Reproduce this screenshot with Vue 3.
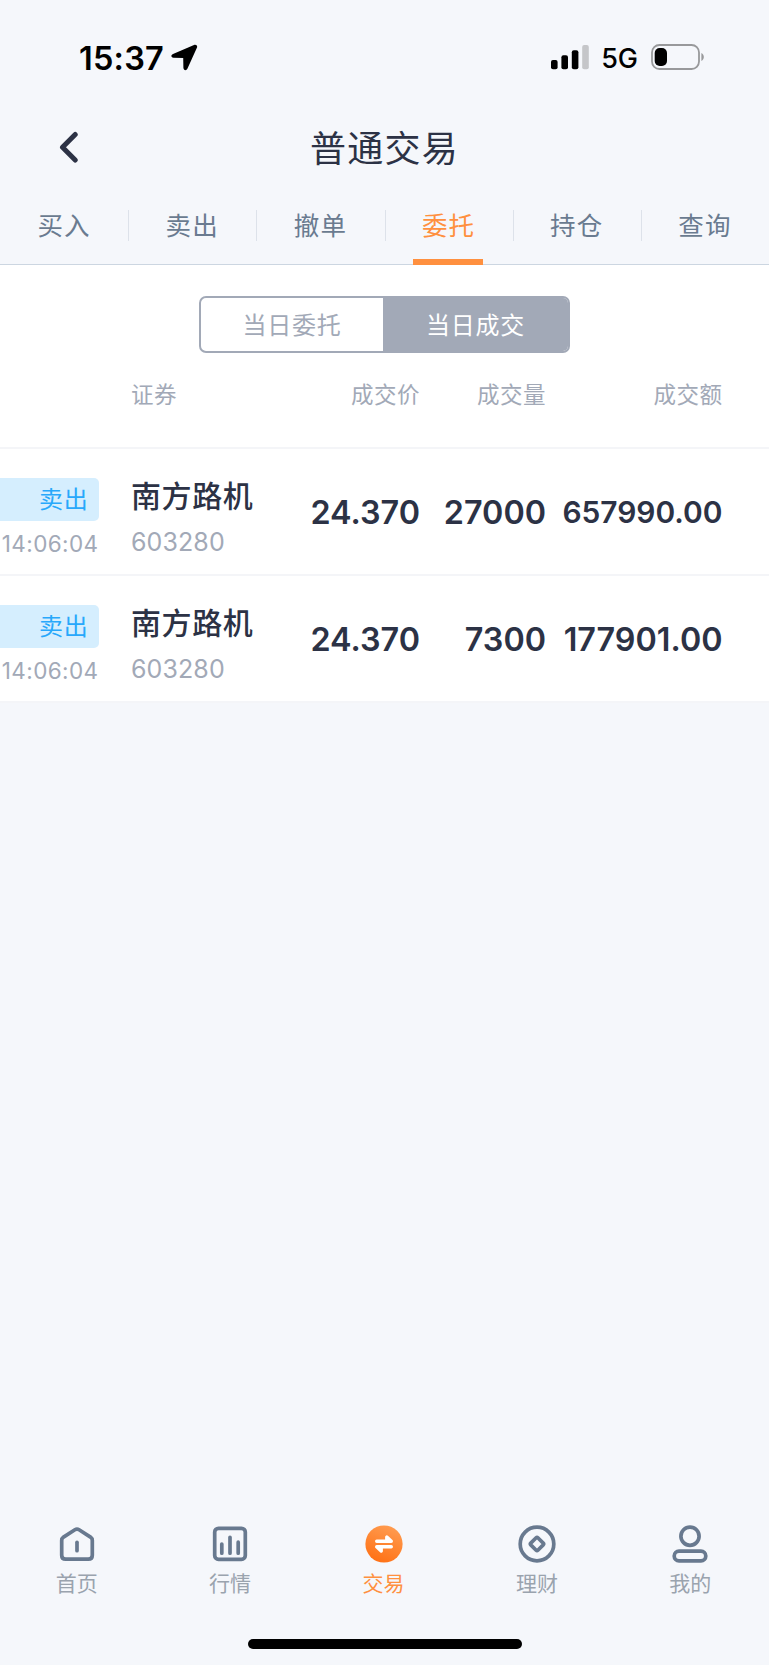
<script setup>
const tabs = ['买入', '卖出', '撤单', '委托', '持仓', '查询']
const activeTab = '委托'
const trades = [
  { side: '卖出', time: '14:06:04', name: '南方路机', code: '603280', price: '24.370', volume: '27000', amount: '657990.00', compact: true },
  { side: '卖出', time: '14:06:04', name: '南方路机', code: '603280', price: '24.370', volume: '7300', amount: '177901.00', compact: false },
]
const navItems = [
  { id: 'home', label: '首页' },
  { id: 'market', label: '行情' },
  { id: 'trade', label: '交易' },
  { id: 'wealth', label: '理财' },
  { id: 'mine', label: '我的' },
]
</script>

<template>
  <div class="screen">
    <header class="status">
      <div class="status-left">
        <span class="clock">15:37</span>
        <svg class="locate" width="27" height="27" viewBox="0 0 27 27">
          <path d="M23 1 2 10C-.4 11.200-.1 13.600 2.400 13.800L12.200 14.100 12.400 23.800C12.600 26.600 15.300 27 16.500 24.600L26 3.600C26.700 1.600 25.100.2 23 1Z" />
        </svg>
      </div>
      <div class="status-right">
        <svg class="signal" width="38" height="25" viewBox="0 0 38 25">
          <rect x="0" y="15" width="6.6" height="9.3" rx="2" />
          <rect x="10.4" y="10.3" width="6.6" height="14" rx="2" />
          <rect x="20.8" y="5.3" width="6.6" height="19" rx="2" />
          <rect x="31.2" y="0" width="6.6" height="24.3" rx="2" fill="#c5c6c9" />
        </svg>
        <span class="network">5G</span>
        <svg class="battery" width="54" height="26" viewBox="0 0 54 26">
          <rect x="1" y="1" width="47" height="24" rx="7.500" fill="none" stroke="#98999b" stroke-width="1.800" />
          <rect x="3.700" y="4" width="12.300" height="18" rx="5" />
          <path d="M50.400 9c3.200 1.500 3.200 6.500 0 8Z" fill="#98999b" />
        </svg>
      </div>
    </header>

    <div class="titlebar">
      <svg class="back" width="20" height="33" viewBox="0 0 20 33">
        <path d="M16.200 3.500 3.500 16.300 16.200 29" />
      </svg>
      <h1 class="title">普通交易</h1>
    </div>

    <nav class="tabs">
      <div v-for="tab in tabs" :key="tab" class="tab" :class="{ active: tab === activeTab }">
        <span>{{ tab }}</span>
      </div>
    </nav>

    <main class="list">
      <div class="segments">
        <div class="segment">当日委托</div>
        <div class="segment selected">当日成交</div>
      </div>
      <div class="row head">
        <span></span>
        <span class="left">证券</span>
        <span>成交价</span>
        <span>成交量</span>
        <span>成交额</span>
      </div>
      <div v-for="(trade, i) in trades" :key="i" class="row trade">
        <div class="action">
          <span class="badge">{{ trade.side }}</span>
          <span class="time">{{ trade.time }}</span>
        </div>
        <div class="security">
          <span class="name">{{ trade.name }}</span>
          <span class="code">{{ trade.code }}</span>
        </div>
        <span class="num">{{ trade.price }}</span>
        <span class="num">{{ trade.volume }}</span>
        <span class="num amount" :class="{ compact: trade.compact }">{{ trade.amount }}</span>
      </div>
    </main>

    <footer class="bottom">
      <nav class="navbar">
        <div v-for="item in navItems" :key="item.id" class="nav-item" :class="{ current: item.id === 'trade' }">
          <svg class="nav-icon" width="40" height="40" viewBox="0 0 40 40">
            <template v-if="item.id === 'home'">
              <path d="M17.900 5.700 6.500 13.100Q4.700 14.400 4.700 16.400V31.200Q4.700 35.200 8.700 35.200H31.300Q35.300 35.200 35.300 31.200V16.400Q35.300 14.400 33.500 13.100L22.100 5.700Q20 4.400 17.900 5.700Z" />
              <path d="M20 18.300V26.700" />
            </template>
            <template v-else-if="item.id === 'market'">
              <rect x="4.700" y="4.300" width="30.600" height="31" rx="3.800" />
              <path d="M11.800 20V29.200M20 13.300V29.200M28.200 18.200V29.200" />
            </template>
            <template v-else-if="item.id === 'trade'">
              <defs>
                <linearGradient id="tradeFill" x1="0.700" y1="0" x2="0.300" y2="1">
                  <stop offset="0" stop-color="#ff9c50" />
                  <stop offset="1" stop-color="#ff7014" />
                </linearGradient>
              </defs>
              <circle cx="20" cy="20" r="18.600" fill="url(#tradeFill)" stroke="none" />
              <path class="arrows" d="M12.700 17.200H27.300L22.800 13.100V16.500M27.300 22.700H12.700L17.200 27V23.400" />
            </template>
            <template v-else-if="item.id === 'wealth'">
              <circle cx="20" cy="20" r="16.800" />
              <rect x="15" y="15" width="10" height="10" rx="1.200" transform="rotate(45 20 20)" />
            </template>
            <template v-else>
              <circle cx="20" cy="12.200" r="9.100" />
              <rect x="4.200" y="27.200" width="31.600" height="9.600" rx="4.800" />
            </template>
          </svg>
          <span class="nav-label">{{ item.label }}</span>
        </div>
      </nav>
      <div class="home-indicator"></div>
    </footer>
  </div>
</template>

<style>
body {
  margin: 0;
  background: #f5f7fb;
}
</style>

<style scoped>
.screen {
  width: 769px;
  height: 1665px;
  display: flex;
  flex-direction: column;
  overflow: hidden;
  background: #f5f7fb;
  color: #2c3245;
  font-family: Inter, "Noto Sans CJK SC", sans-serif;
}
.status {
  height: 116px;
  flex: none;
  display: flex;
  justify-content: space-between;
  box-sizing: border-box;
  padding: 0 64px 0 79px;
  color: #000;
}
.status-left,
.status-right {
  display: flex;
  align-items: center;
  height: 116px;
}
.clock {
  font-size: 32.500px;
  font-weight: 600;
  letter-spacing: 0.200px;
}
.locate {
  margin-left: 7px;
  margin-bottom: 1px;
}
.signal {
  margin-bottom: 1px;
}
.network {
  margin-left: 12px;
  font-size: 27px;
  font-weight: 500;
}
.battery {
  margin-left: 13px;
  margin-bottom: 2px;
}
.titlebar {
  height: 64px;
  flex: none;
  display: grid;
  grid-template-columns: 79px 1fr 79px;
  align-items: center;
}
.back {
  justify-self: end;
  margin-bottom: 1px;
  fill: none;
  stroke: #2c3245;
  stroke-width: 5;
  stroke-linecap: round;
  stroke-linejoin: round;
}
.title {
  margin: 0;
  padding-top: 3px;
  text-align: center;
  font-size: 36px;
  line-height: 61px;
  font-weight: 400;
  letter-spacing: 1.300px;
}
.tabs {
  height: 85px;
  flex: none;
  display: flex;
  box-sizing: border-box;
  border-bottom: 1px solid #ccd6e1;
}
.tab {
  position: relative;
  flex: 1;
  display: flex;
  justify-content: center;
  padding-top: 31px;
  height: 53px;
  line-height: 30px;
  font-size: 25.500px;
  letter-spacing: 1.200px;
  color: #6a7b90;
}
.tab + .tab::before {
  content: "";
  position: absolute;
  left: 0;
  top: 30px;
  width: 1px;
  height: 31px;
  background: #dde2ea;
}
.tab.active {
  color: #ff903f;
}
.tab.active::after {
  content: "";
  position: absolute;
  left: 28.500px;
  top: 79px;
  width: 70px;
  height: 6px;
  background: #ff903f;
}
.list {
  background: #fff;
  padding-top: 31px;
}
.segments {
  display: flex;
  width: 371px;
  height: 57px;
  margin-left: 199px;
  box-sizing: border-box;
  border: 2px solid #a2a9b7;
  border-radius: 7px;
  overflow: hidden;
}
.segment {
  flex: 1;
  line-height: 55px;
  text-align: center;
  font-size: 24px;
  letter-spacing: 0.800px;
  color: #a2a9b7;
}
.segment.selected {
  flex: 0 0 185px;
  background: #a2a9b7;
  color: #fff;
}
.row {
  display: grid;
  grid-template-columns: 131px 151px 138px 126px 176.500px;
  box-sizing: border-box;
  border-bottom: 2px solid #f4f5f8;
  text-align: right;
}
.head {
  height: 96px;
  padding-top: 26px;
  line-height: 32px;
  font-size: 22.500px;
  letter-spacing: 0.500px;
  color: #a2a9b7;
}
.left {
  text-align: left;
}
.trade {
  height: 127px;
}
.action {
  display: flex;
  flex-direction: column;
  align-items: flex-end;
  width: 98.500px;
  padding-top: 29px;
}
.badge {
  width: 98.500px;
  height: 43px;
  box-sizing: border-box;
  padding-right: 10px;
  border-radius: 0 5px 5px 0;
  background: #d5eefe;
  color: #28a8fb;
  font-size: 24px;
  line-height: 44px;
  letter-spacing: 0.700px;
}
.time {
  margin-top: 9px;
  color: #a2a9b7;
  font-size: 22.500px;
  line-height: 28px;
  letter-spacing: 0.400px;
}
.security {
  display: flex;
  flex-direction: column;
  text-align: left;
  padding-top: 27px;
}
.name {
  font-size: 30px;
  line-height: 40px;
  font-weight: 500;
  letter-spacing: 0.600px;
}
.code {
  margin-top: 11px;
  color: #a2a9b7;
  font-size: 25px;
  line-height: 30px;
  letter-spacing: 0.100px;
}
.num {
  font-size: 32.300px;
  line-height: 127px;
  font-weight: 600;
  white-space: nowrap;
}
.num.compact {
  font-size: 29.900px;
}
.bottom {
  margin-top: auto;
  height: 141px;
}
.navbar {
  display: flex;
  padding-right: 2px;
}
.nav-item {
  flex: 1;
  display: flex;
  flex-direction: column;
  align-items: center;
  color: #9aa3ae;
}
.nav-icon {
  fill: none;
  stroke: #68798f;
  stroke-width: 3.700;
  stroke-linecap: round;
  stroke-linejoin: round;
}
.arrows {
  stroke: #fff;
  stroke-width: 3.400;
}
.nav-label {
  margin-top: 4px;
  font-size: 21px;
  line-height: 31px;
}
.current .nav-label {
  color: #ff903f;
}
.home-indicator {
  width: 274px;
  height: 10px;
  margin: 40px auto 0;
  border-radius: 5px;
  background: #000;
}
</style>
